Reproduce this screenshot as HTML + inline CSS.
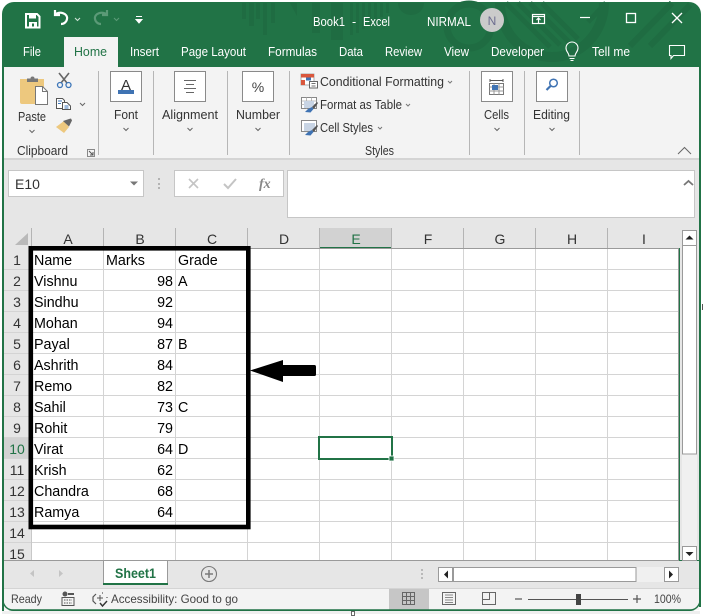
<!DOCTYPE html>
<html><head><meta charset="utf-8"><title>Book1 - Excel</title>
<style>
html,body{margin:0;padding:0;background:#fff}
svg{display:block}
text{font-family:"Liberation Sans",sans-serif;white-space:pre}
.tab{font-size:12.5px;fill:#fff}
.rb{font-size:12.5px;fill:#333}
.c{font-size:14.3px;fill:#000}
.h{font-size:14px;fill:#333;text-anchor:middle}
.s{font-size:12px;fill:#444}
</style></head><body>
<svg width="703" height="616" viewBox="0 0 703 616" xmlns="http://www.w3.org/2000/svg">
<rect width="703" height="616" fill="#fff"/>
<rect x="2" y="611" width="698" height="3" fill="#efefef"/>
<!-- window -->
<path d="M2 14a12 12 0 0 1 12-12H689a12 12 0 0 1 12 12V600a11 11 0 0 1-11 11H13a11 11 0 0 1-11-11Z" fill="#217346"/>
<rect x="3" y="67" width="697" height="91" fill="#f3f3f3"/>
<rect x="3" y="158" width="697" height="2" fill="#d4d4d4"/>
<rect x="3" y="160" width="697" height="88" fill="#e6e6e6"/>
<!-- title decoration -->
<g fill="#1f6c42">
<rect x="242" y="3" width="4" height="16"/><rect x="249" y="3" width="5" height="23"/><rect x="256" y="3" width="4" height="16"/><rect x="263" y="3" width="4" height="32"/><rect x="271" y="3" width="4" height="20"/>
<path d="M290 3h7v13Z"/><rect x="312" y="3" width="8" height="30"/><rect x="331" y="3" width="12" height="37"/>
<rect x="350" y="3" width="3" height="32"/><rect x="356" y="3" width="3" height="30"/><rect x="362" y="3" width="3" height="26"/><rect x="368" y="3" width="3" height="22"/><rect x="374" y="3" width="3" height="18"/><rect x="380" y="3" width="3" height="14"/><rect x="386" y="3" width="3" height="10"/>
<path d="M398 3h26a13 12 0 0 1-26 0Z"/>
</g>
<g fill="none" stroke="#1f6c42">
<circle cx="469" cy="26" r="22" stroke-width="7"/>
<path d="M500 3A52 54 0 0 0 604 3" stroke-width="10"/>
<path d="M506 3L550 47M518 3L560 45M530 3L570 43M542 3L578 39" stroke-width="5"/>
<path d="M630 46L672 3M650 46L690 5" stroke-width="6"/>
<path d="M606 3L588 22" stroke-width="5"/>
</g>
<rect x="2" y="67" width="2" height="544" fill="#217346"/>
<rect x="699" y="67" width="2" height="540" fill="#217346"/>
<!-- QAT -->
<path d="M26 14h11l2.500 2.500V27.500H26Z" fill="none" stroke="#fff" stroke-width="2"/>
<path d="M29 14h7v4.500h-7ZM29 22h8v5h-8Z" fill="#fff"/>
<path d="M32 23.500h2v3h-2Z" fill="#217346"/>
<path d="M60 15h-5v-5M55.500 14.500C59 11 68 13 67 19c-.5 3-3 5-6 5" fill="none" stroke="#fff" stroke-width="2.200"/>
<path d="M75 18l2.500 2.500L80 18" fill="none" stroke="#cfe3d7" stroke-width="1.100"/>
<path d="M102 15h5v-5M106.500 14.500C103 11 94 13 95 19c.5 3 3 5 6 5" fill="none" stroke="#5b9a77" stroke-width="2.200"/>
<path d="M114 18l2.500 2.500L119 18" fill="none" stroke="#5b9a77" stroke-width="1.100"/>
<path d="M136 16.500h6M136 19.500h6l-3 3.500Z" fill="#fff" stroke="#fff" stroke-width="1"/>
<!-- title text -->
<text x="313" y="26" class="tab" textLength="32" lengthAdjust="spacingAndGlyphs">Book1</text>
<text x="352" y="26" class="tab">-</text>
<text x="363" y="26" class="tab" textLength="27" lengthAdjust="spacingAndGlyphs">Excel</text>
<text x="427" y="26" class="tab" textLength="44" lengthAdjust="spacingAndGlyphs">NIRMAL</text>
<circle cx="492" cy="20" r="12" fill="#cbcbcb"/>
<text x="492" y="25" font-size="12" fill="#6d6d8f" text-anchor="middle">N</text>
<!-- window controls -->
<g fill="none" stroke="#fff" stroke-width="1.200">
<rect x="532.500" y="14.500" width="12" height="9"/><path d="M533 16.500h11" /><path d="M538.500 23v-5M536.500 20l2-2 2 2"/>
<path d="M580 17.500h10"/>
<rect x="626.500" y="13.500" width="9" height="9" stroke-width="1.300"/><path d="M672 13l10 10M682 13l-10 10" stroke-width="1.300"/>
</g>
<!-- tabs -->
<rect x="64" y="37" width="54" height="31" fill="#f3f3f3"/>
<text x="23" y="56" class="tab" textLength="18" lengthAdjust="spacingAndGlyphs">File</text>
<text x="74" y="56" class="tab" style="fill:#217346" textLength="33" lengthAdjust="spacingAndGlyphs">Home</text>
<text x="130" y="56" class="tab" textLength="29" lengthAdjust="spacingAndGlyphs">Insert</text>
<text x="181" y="56" class="tab" textLength="65" lengthAdjust="spacingAndGlyphs">Page Layout</text>
<text x="268" y="56" class="tab" textLength="49" lengthAdjust="spacingAndGlyphs">Formulas</text>
<text x="339" y="56" class="tab" textLength="24" lengthAdjust="spacingAndGlyphs">Data</text>
<text x="385" y="56" class="tab" textLength="37" lengthAdjust="spacingAndGlyphs">Review</text>
<text x="444" y="56" class="tab" textLength="25" lengthAdjust="spacingAndGlyphs">View</text>
<text x="491" y="56" class="tab" textLength="53" lengthAdjust="spacingAndGlyphs">Developer</text>
<path d="M569 56c0-3-3-4-3-8a6 6 0 0 1 12 0c0 4-3 5-3 8ZM569.500 58.500h5M570.500 60.500h3" fill="none" stroke="#fff" stroke-width="1.100"/>
<text x="592" y="56" class="tab" textLength="38" lengthAdjust="spacingAndGlyphs">Tell me</text>
<path d="M669.500 45.500h15v10h-11l-2.500 3v-3h-1.500Z" fill="none" stroke="#fff" stroke-width="1.100"/>
<!-- separators -->
<g fill="#b6b6b6"><rect x="98" y="71" width="1" height="84"/><rect x="153" y="71" width="1" height="84"/><rect x="227" y="71" width="1" height="84"/><rect x="289" y="71" width="1" height="84"/><rect x="469" y="71" width="1" height="84"/><rect x="524" y="71" width="1" height="84"/><rect x="579" y="71" width="1" height="84"/></g>
<!-- Clipboard icons -->
<path d="M20 79h24v25H22a2 2 0 0 1-2-2Z" fill="#edc87e"/>
<path d="M27 81v-2.500h3.500a2 2 0 0 1 4 0H38V82H27Z" fill="#777"/>
<path d="M35.500 86.500h7l5 5v13h-12Z" fill="#fff" stroke="#777" stroke-width="1"/>
<path d="M42.500 86.500v5h5" fill="none" stroke="#777"/>
<text x="18" y="121" class="rb" textLength="28" lengthAdjust="spacingAndGlyphs">Paste</text>
<path d="M29.500 130l2.500 2.500 2.500-2.500" fill="none" stroke="#666"/>
<path d="M59 73l8 10M69 73l-8 10" stroke="#666" stroke-width="1.600" fill="none"/>
<circle cx="60" cy="85" r="2.500" fill="none" stroke="#3d76b8" stroke-width="1.300"/><circle cx="68.500" cy="85" r="2.500" fill="none" stroke="#3d76b8" stroke-width="1.300"/>
<path d="M56.500 98.500h6l2 2v8h-8Z" fill="#fff" stroke="#555"/><path d="M62.500 102.500h4.500l3.500 3.500v3.500h-8Z" fill="#fff" stroke="#555"/><path d="M58 101h4M58 103.500h3M64.500 106h4M64.500 108h4" stroke="#3d76b8"/>
<path d="M80 103l2.500 2.500L85 103" fill="none" stroke="#666"/>
<path d="M56 127l8-6 5 6-5 6Z" fill="#edc87e"/><path d="M63 121l6-2 2-0.500 1 2-3 6Z" fill="#666"/>
<text x="17" y="155" class="rb" textLength="51" lengthAdjust="spacingAndGlyphs">Clipboard</text>
<rect x="87.500" y="149.500" width="7" height="7" fill="none" stroke="#888"/><path d="M89 151l4 4M93 152v3h-3" fill="none" stroke="#555"/>
<!-- group boxes -->
<g fill="#fff" stroke="#8a8a8a"><rect x="110.500" y="71.500" width="31" height="30"/><rect x="174.500" y="71.500" width="31" height="30"/><rect x="242.500" y="71.500" width="31" height="30"/><rect x="481.500" y="71.500" width="31" height="30"/><rect x="536.500" y="71.500" width="31" height="30"/></g>
<text x="126" y="90" font-size="15" fill="#333" text-anchor="middle">A</text>
<rect x="118" y="90" width="16" height="4" fill="#3f73b3"/>
<path d="M184 81.500h12M186 85.500h8M184 89.500h12M186 93.500h8" transform="translate(0,-1)" stroke="#666" stroke-width="1"/>
<text x="258" y="92" font-size="14" fill="#444" text-anchor="middle">%</text>
<path d="M490 80.500h13M490 79v3M503 79v3" stroke="#555" fill="none"/>
<rect x="489.500" y="83.500" width="14" height="11" fill="#fff" stroke="#777"/><path d="M489.500 87h14M489.500 91h14M494 83.500v11M499 83.500v11" stroke="#999"/><rect x="492" y="85" width="6" height="5" fill="#3f73b3"/>
<circle cx="553.500" cy="83" r="3.800" fill="none" stroke="#3f73b3" stroke-width="1.500"/><path d="M550.500 86l-4 4" stroke="#3f73b3" stroke-width="2.200"/>
<text x="114" y="119" class="rb" textLength="24" lengthAdjust="spacingAndGlyphs">Font</text>
<text x="162" y="119" class="rb" textLength="56" lengthAdjust="spacingAndGlyphs">Alignment</text>
<text x="236" y="119" class="rb" textLength="44" lengthAdjust="spacingAndGlyphs">Number</text>
<text x="484" y="119" class="rb" textLength="25" lengthAdjust="spacingAndGlyphs">Cells</text>
<text x="533" y="119" class="rb" textLength="37" lengthAdjust="spacingAndGlyphs">Editing</text>
<g fill="none" stroke="#666"><path d="M123.500 128l2.500 2.500 2.500-2.500M187.500 128l2.500 2.500 2.500-2.500M255.500 128l2.500 2.500 2.500-2.500M494.500 128l2.500 2.500 2.500-2.500M549.500 128l2.500 2.500 2.500-2.500"/></g>
<!-- styles -->
<rect x="301" y="74" width="13" height="11" fill="#fff" stroke="#999" stroke-width=".8"/><rect x="301" y="74" width="13" height="3.500" fill="#d9573d"/><rect x="301" y="80" width="4" height="5" fill="#d9573d"/><rect x="306" y="77.500" width="5" height="3" fill="#3f73b3"/>
<rect x="309.500" y="81.500" width="8" height="6.500" fill="#fff" stroke="#666"/><path d="M311.500 83.500h4M311.500 86h4" stroke="#444" stroke-width=".8"/>
<g id="tbl"><rect x="301.500" y="97.500" width="15" height="11" fill="#fff" stroke="#888"/><path d="M301.500 101h15M301.500 104.500h15M306.500 97.500v11M311.500 97.500v11" stroke="#aaa" stroke-width=".8"/><rect x="304" y="101" width="10" height="7" fill="#c8d4e4"/><path d="M305 112l3-3 4-2 1.500 2-3 3.500Z" fill="#3f73b3"/><path d="M312 107l5-5 1 1-4 6Z" fill="#555"/></g>
<rect x="301.500" y="120.500" width="15" height="11" fill="#fff" stroke="#888"/><rect x="304" y="123" width="11" height="8" fill="#c8d4e4"/><path d="M305 135l3-3 4-2 1.500 2-3 3.500Z" fill="#3f73b3"/><path d="M312 130l5-5 1 1-4 6Z" fill="#555"/>
<text x="320" y="86" class="rb" textLength="124" lengthAdjust="spacingAndGlyphs">Conditional Formatting</text>
<text x="320" y="109" class="rb" textLength="82" lengthAdjust="spacingAndGlyphs">Format as Table</text>
<text x="320" y="132" class="rb" textLength="53" lengthAdjust="spacingAndGlyphs">Cell Styles</text>
<g fill="none" stroke="#777"><path d="M448 81l2 2 2-2M406 104l2 2 2-2M378 127l2 2 2-2"/></g>
<text x="365" y="155" class="rb" textLength="29" lengthAdjust="spacingAndGlyphs">Styles</text>
<path d="M678 154l6.500-6.500 6.500 6.500" fill="none" stroke="#666"/>
<!-- formula bar -->
<rect x="8.500" y="170.500" width="135" height="26" fill="#fff" stroke="#c6c6c6"/>
<text x="15" y="189" font-size="14" fill="#333">E10</text>
<path d="M130 181.500h8l-4 4Z" fill="#777"/>
<g fill="#b3b3b3"><rect x="158" y="178" width="2" height="2"/><rect x="158" y="183" width="2" height="2"/><rect x="158" y="187" width="2" height="2"/></g>
<rect x="174.500" y="170.500" width="109" height="26" fill="#fff" stroke="#c6c6c6"/>
<path d="M189 179l9 9M198 179l-9 9" stroke="#c4c4c4" stroke-width="1.600"/>
<path d="M224 184l4 4 8-9" fill="none" stroke="#c4c4c4" stroke-width="2"/>
<text x="259" y="188" font-size="14" font-style="italic" font-weight="bold" fill="#888" style="font-family:'Liberation Serif',serif">fx</text>
<rect x="287.500" y="170.500" width="407" height="47" fill="#fff" stroke="#c6c6c6"/>
<path d="M684 185l4.500-4 4.500 4" fill="none" stroke="#777" stroke-width="1.800"/>
<!-- sheet -->
<rect x="4" y="228" width="675" height="20" fill="#e6e6e6"/>
<rect x="4" y="248" width="28" height="312" fill="#e6e6e6"/>
<rect x="32" y="248" width="647" height="312" fill="#fff"/>
<path d="M28 233v12H15Z" fill="#b9b9b9"/>
<rect x="320" y="228" width="72" height="20" fill="#d2d2d2"/>
<rect x="320" y="247" width="72" height="2" fill="#217346"/>
<rect x="4" y="437" width="28" height="21" fill="#d2d2d2"/>
<g fill="#b4b4b4"><rect x="31" y="228" width="1" height="20"/><rect x="103" y="228" width="1" height="20"/><rect x="175" y="228" width="1" height="20"/><rect x="247" y="228" width="1" height="20"/><rect x="319" y="228" width="1" height="20"/><rect x="391" y="228" width="1" height="20"/><rect x="463" y="228" width="1" height="20"/><rect x="535" y="228" width="1" height="20"/><rect x="607" y="228" width="1" height="20"/></g>
<!-- gridlines -->
<g stroke="#d4d4d4" stroke-width="1" shape-rendering="crispEdges">
<path d="M103.500 248V560M175.500 248V560M247.500 248V560M319.500 248V560M391.500 248V560M463.500 248V560M535.500 248V560M607.500 248V560"/>
<path d="M4 269.500H678M4 290.500H678M4 311.500H678M4 332.500H678M4 353.500H678M4 374.500H678M4 395.500H678M4 416.500H678M4 437.500H678M4 458.500H678M4 479.500H678M4 500.500H678M4 521.500H678M4 542.500H678"/>
</g>
<path d="M31.500 248.500H678.500V560.500H4" fill="none" stroke="#9a9a9a"/>
<path d="M31.500 248V560" stroke="#c8c8c8"/>
<g class="hd">
<text x="68" y="244" class="h">A</text><text x="140" y="244" class="h">B</text><text x="212" y="244" class="h">C</text><text x="284" y="244" class="h">D</text><text x="356" y="244" class="h" style="fill:#217346">E</text><text x="428" y="244" class="h">F</text><text x="500" y="244" class="h">G</text><text x="572" y="244" class="h">H</text><text x="644" y="244" class="h">I</text>
<text x="17" y="265" class="h">1</text><text x="17" y="286" class="h">2</text><text x="17" y="307" class="h">3</text><text x="17" y="328" class="h">4</text><text x="17" y="349" class="h">5</text><text x="17" y="370" class="h">6</text><text x="17" y="391" class="h">7</text><text x="17" y="412" class="h">8</text><text x="17" y="433" class="h">9</text><text x="17" y="454" class="h" style="fill:#217346">10</text><text x="17" y="475" class="h">11</text><text x="17" y="496" class="h">12</text><text x="17" y="517" class="h">13</text><text x="17" y="538" class="h">14</text><text x="17" y="559" class="h">15</text>
</g>
<g class="cells">
<text x="34" y="265" class="c">Name</text><text x="106" y="265" class="c">Marks</text><text x="178" y="265" class="c">Grade</text>
<text x="34" y="286" class="c">Vishnu</text><text x="34" y="307" class="c">Sindhu</text><text x="34" y="328" class="c">Mohan</text><text x="34" y="349" class="c">Payal</text><text x="34" y="370" class="c">Ashrith</text><text x="34" y="391" class="c">Remo</text><text x="34" y="412" class="c">Sahil</text><text x="34" y="433" class="c">Rohit</text><text x="34" y="454" class="c">Virat</text><text x="34" y="475" class="c">Krish</text><text x="34" y="496" class="c">Chandra</text><text x="34" y="517" class="c">Ramya</text>
<g text-anchor="end"><text x="173" y="286" class="c">98</text><text x="173" y="307" class="c">92</text><text x="173" y="328" class="c">94</text><text x="173" y="349" class="c">87</text><text x="173" y="370" class="c">84</text><text x="173" y="391" class="c">82</text><text x="173" y="412" class="c">73</text><text x="173" y="433" class="c">79</text><text x="173" y="454" class="c">64</text><text x="173" y="475" class="c">62</text><text x="173" y="496" class="c">68</text><text x="173" y="517" class="c">64</text></g>
<text x="178" y="286" class="c">A</text><text x="178" y="349" class="c">B</text><text x="178" y="412" class="c">C</text><text x="178" y="454" class="c">D</text>
</g>
<!-- annotation -->
<rect x="30.800" y="248.300" width="217.500" height="278.700" fill="none" stroke="#000" stroke-width="4.600"/>
<path d="M250 370.500L283 360V365H314.500Q316 365 316 367V374.500Q316 376 314.500 376H283V382Z" fill="#000"/>
<!-- selection -->
<rect x="319" y="437" width="73" height="22" fill="none" stroke="#217346" stroke-width="2"/>
<rect x="389" y="456" width="5" height="5" fill="#217346" stroke="#fff" stroke-width=".8"/>
<!-- v scroll -->
<rect x="680" y="228" width="19" height="332" fill="#e6e6e6"/>
<rect x="682" y="230" width="15" height="330" fill="#f0f0f0"/>
<rect x="682.500" y="230.500" width="14" height="15" fill="#fff" stroke="#9a9a9a"/>
<path d="M685.500 239.500h8l-4-4Z" fill="#222"/>
<rect x="682.500" y="245.500" width="14" height="208.500" fill="#fff" stroke="#9a9a9a"/>
<rect x="682.500" y="546.500" width="14" height="14" fill="#fff" stroke="#9a9a9a"/>
<path d="M685.500 552h8l-4 4Z" fill="#222"/>
<!-- tab bar -->
<rect x="4" y="561" width="695" height="27" fill="#e6e6e6"/>
<rect x="4" y="588" width="695" height="1" fill="#d4d4d4"/>
<path d="M34 570v7l-4-3.500ZM59 570v7l4-3.500Z" fill="#c4c4c4"/>
<path d="M103.500 561v23.500h64V561" fill="#fff" stroke="#9a9a9a"/>
<rect x="103" y="583" width="65" height="2" fill="#217346"/>
<text x="115" y="578" font-size="13.500" font-weight="bold" fill="#217346" textLength="41" lengthAdjust="spacingAndGlyphs">Sheet1</text>
<circle cx="209" cy="574" r="7.500" fill="none" stroke="#7a7a7a" stroke-width="1.100"/>
<path d="M205 574h8M209 570v8" stroke="#7a7a7a" stroke-width="1.500"/>
<g fill="#b9b9b9"><rect x="421" y="569" width="2" height="2"/><rect x="421" y="573" width="2" height="2"/><rect x="421" y="577" width="2" height="2"/></g>
<rect x="438" y="567" width="241" height="15" fill="#f0f0f0"/>
<rect x="438.500" y="567.500" width="14" height="14" fill="#fff" stroke="#9a9a9a"/>
<path d="M448 570.500v8l-4-4Z" fill="#222"/>
<rect x="453.500" y="567.500" width="182.500" height="14" fill="#fff" stroke="#9a9a9a"/>
<rect x="664.500" y="567.500" width="14" height="14" fill="#fff" stroke="#9a9a9a"/>
<path d="M669 570.500v8l4-4Z" fill="#222"/>
<!-- status -->
<rect x="4" y="589" width="695" height="21" fill="#f3f3f3"/>
<path d="M4 610h7c-4 0-7-3-7-7ZM699 604v6h-8c4 0 8-2 8-6Z" fill="#f3f3f3"/>
<text x="11" y="603" class="s" textLength="31" lengthAdjust="spacingAndGlyphs">Ready</text>
<circle cx="65" cy="594" r="2.500" fill="#555"/><rect x="68" y="593" width="6" height="2" fill="#555"/><rect x="62" y="597.500" width="12" height="8" fill="none" stroke="#555"/><path d="M64 600h8M64 603h8" stroke="#555" stroke-dasharray="1.500 1"/>
<path d="M96 594l-3 3v4l3 3M102 593h1M107 597v1" fill="none" stroke="#555" stroke-width="1.200"/><path d="M100 595v6M97 598h6" stroke="#555" stroke-width="1"/><path d="M100 603l2.500 3 4.500-5" fill="none" stroke="#333" stroke-width="1.400"/>
<text x="111" y="603" class="s" textLength="127" lengthAdjust="spacingAndGlyphs">Accessibility: Good to go</text>
<rect x="389" y="589" width="40" height="21" fill="#c6c6c6"/>
<path d="M402.500 592.500h12v12h-12ZM402.500 596.500h12M402.500 600.500h12M406.500 592.500v12M410.500 592.500v12" fill="none" stroke="#666"/>
<rect x="442.500" y="592.500" width="13" height="12" fill="none" stroke="#666"/><path d="M445 595h8M445 597.500h8M445 600h8M445 602.500h8" stroke="#666" stroke-width=".8"/>
<path d="M482.500 592.500h13v12h-13ZM482.500 599.500h7v-7" fill="none" stroke="#666"/>
<path d="M515 599h7" stroke="#555" stroke-width="1.200"/>
<rect x="528" y="599" width="100" height="1" fill="#555"/>
<rect x="576" y="594" width="5" height="11" fill="#444"/>
<path d="M633 599h8M637 595v8" stroke="#555" stroke-width="1.200"/>
<text x="654" y="603" class="s" textLength="27" lengthAdjust="spacingAndGlyphs">100%</text>
<!-- bottom border -->
<path d="M3 600a10 10 0 0 0 10 10H690a10 10 0 0 0 10-10" fill="none" stroke="#217346" stroke-width="1.400"/>
<rect x="351.500" y="611.500" width="3" height="4" fill="#fff" stroke="#444" stroke-width=".8"/>
<rect x="702" y="304" width="1" height="6" fill="#555"/>
</svg>
</body></html>
